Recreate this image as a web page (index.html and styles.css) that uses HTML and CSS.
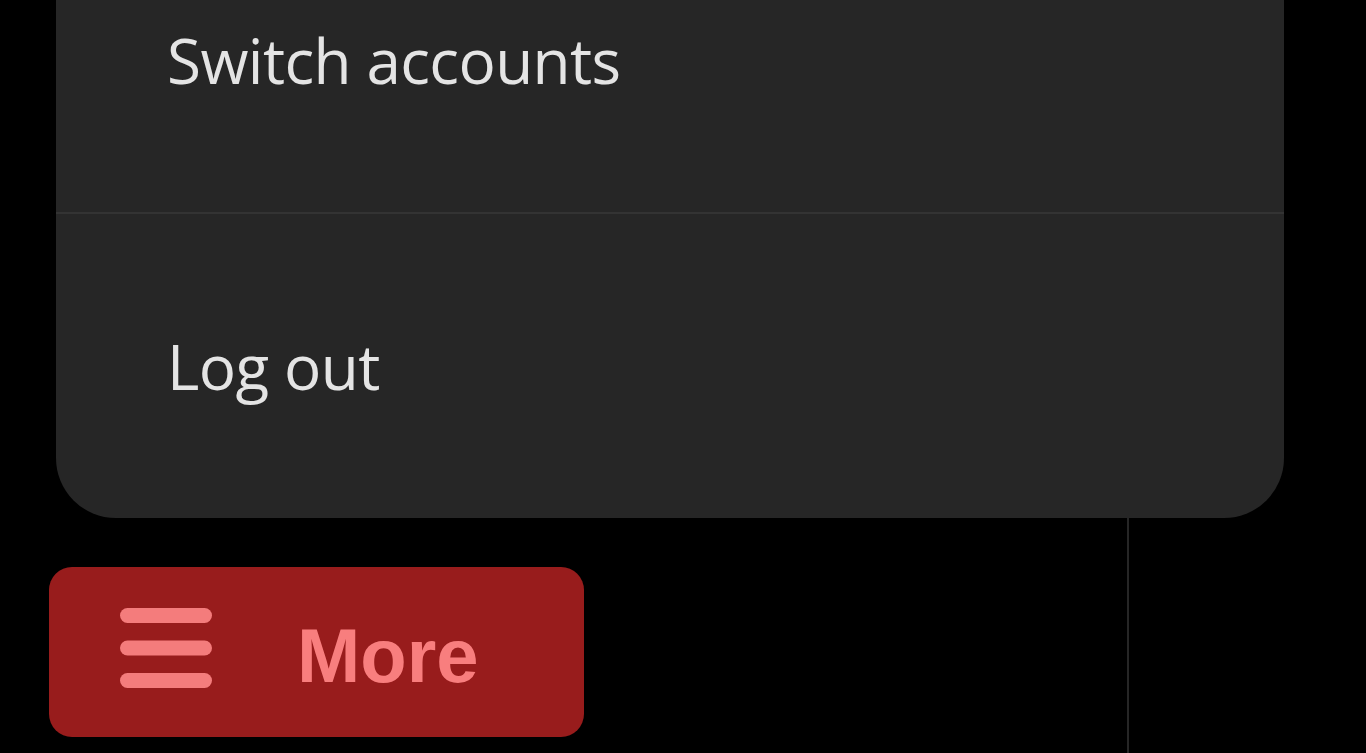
FILE: index.html
```html
<!DOCTYPE html>
<html lang="en">
<head>
  <meta charset="UTF-8" />
  <title>More menu</title>
  <link rel="stylesheet" href="styles.css">
</head>
<body>
  <div class="layout">
    <nav class="sidebar">
      <button class="more-btn">
        <svg class="more-icon" width="92" height="80" viewBox="0 0 92 80">
          <line x1="7.5" y1="7.5" x2="84.5" y2="7.5" />
          <line x1="7.5" y1="40" x2="84.5" y2="40" />
          <line x1="7.5" y1="72.5" x2="84.5" y2="72.5" />
        </svg>
        <span>More</span>
      </button>
    </nav>
    <main class="content"></main>

    <div class="menu">
      <div class="menu-item">Switch accounts</div>
      <div class="menu-item last">Log out</div>
    </div>
  </div>
</body>
</html>
```

FILE: styles.css
```css
body { margin: 0; background: #000; font-family: "Open Sans", "Noto Sans", sans-serif; overflow: hidden; }
.layout { position: relative; display: flex; height: 753px; }
.sidebar { width: 1129px; border-right: 2px solid #262626; display: flex; flex-direction: column; justify-content: flex-end; padding: 0 0 16px 49px; box-sizing: border-box; }
.content { flex: 1; }

.more-btn { display: flex; align-items: center; gap: 85px; width: 535px; height: 170px; padding: 0 0 0 71px; border: none; border-radius: 23px; background: #981c1c; color: #f87e7e; font-family: "Liberation Sans", Arial, sans-serif; font-weight: bold; font-size: 76px; cursor: pointer; box-sizing: border-box; }
.more-btn span { margin-top: 6px; }
.more-icon { margin-top: -8px; }
.more-icon line { stroke: #f47c7c; stroke-width: 15; stroke-linecap: round; }

.menu { position: absolute; left: 56px; top: -92px; width: 1228px; background: #262626; border-radius: 0 0 60px 60px; }
.menu-item { height: 304px; display: flex; align-items: center; padding-left: 111px; color: #e4e4e4; font-size: 62px; letter-spacing: -0.6px; border-bottom: 2px solid #333; }
.menu-item.last { border-bottom: none; }
```
